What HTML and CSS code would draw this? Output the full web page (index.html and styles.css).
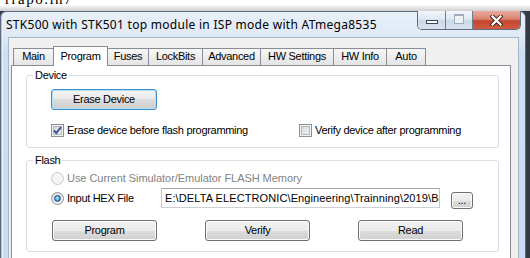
FILE: index.html
```html
<!DOCTYPE html>
<html lang="en">
    <head>
        <meta charset="UTF-8">
        <title>STK500</title>
        <link rel="stylesheet" href="styles.css">
    </head>
    <body>
    <div class="doc-strip"><p class="doc-text">rrapo.ın7</p></div>
    <div class="screen">
        <div class="window">
            <div class="titlebar">
                <div class="title">STK500 with STK501 top module in ISP mode with ATmega8535</div>
                <div class="caption-btns">
                    <div class="cap cap-min"><span class="min-bar"></span></div>
                    <div class="cap cap-max"><span class="max-box"></span></div>
                    <div class="cap cap-close">
                        <svg width="13" height="11" viewBox="0 0 13 11">
                            <path d="M2.5 1.5 L10.5 9.5 M10.5 1.5 L2.5 9.5" stroke="#4b2720" stroke-width="4.2" stroke-linecap="square" fill="none"/>
                            <path d="M2.5 1.5 L10.5 9.5 M10.5 1.5 L2.5 9.5" stroke="#fff" stroke-width="2.2" stroke-linecap="square" fill="none"/>
                        </svg>
                    </div>
                </div>
            </div>
            <div class="client">
                <div class="tabs">
                    <div class="tab tab-main">Main</div>
                    <div class="tab tab-program active">Program</div>
                    <div class="tab tab-fuses">Fuses</div>
                    <div class="tab tab-lockbits">LockBits</div>
                    <div class="tab tab-advanced">Advanced</div>
                    <div class="tab tab-hwsettings">HW Settings</div>
                    <div class="tab tab-hwinfo">HW Info</div>
                    <div class="tab tab-auto">Auto</div>
                </div>
                <div class="tab-page">
                    <fieldset class="group">
                        <legend>Device</legend>
                        <div class="device-body">
                            <button class="btn btn-default">Erase Device</button>
                            <div class="check-row">
                                <div class="check">
                                    <span class="box">
                                        <svg width="11" height="11" viewBox="0 0 11 11">
                                            <path d="M2 5.5 L4.3 8 L9 2.2" stroke="#3e5597" stroke-width="1.9" fill="none"/>
                                        </svg>
                                    </span>Erase device before flash programming
                                </div>
                                <div class="check"><span class="box"></span>Verify device after programming</div>
                            </div>
                        </div>
                    </fieldset>
                    <fieldset class="group">
                        <legend>Flash</legend>
                        <div class="flash-body">
                            <div class="option disabled"><span class="radio"></span>Use Current Simulator/Emulator FLASH Memory</div>
                            <div class="file-row">
                                <div class="option option-file"><span class="radio on"><span class="dot"></span></span>Input HEX File</div>
                                <div class="textbox"><span class="path">E:\DELTA ELECTRONIC\Engineering\Trainning\2019\Board</span></div>
                                <button class="btn btn-browse">...</button>
                            </div>
                            <div class="btn-row">
                                <button class="btn">Program</button>
                                <button class="btn">Verify</button>
                                <button class="btn">Read</button>
                            </div>
                        </div>
                    </fieldset>
                </div>
            </div>
        </div>
    </div>
    </body>
</html>
```
FILE: styles.css
```css
body {
    margin: 0;
    width: 530px;
    height: 258px;
    overflow: hidden;
    background: #fff;
    font-family: "Liberation Sans", Arial, sans-serif;
    font-size: 11px;
    letter-spacing: -0.3px;
    color: #000;
}

/* document behind the window, only the bottom of one line shows */
.doc-strip {
    height: 11px;
    display: flex;
    align-items: flex-end;
    overflow: hidden;
    background: linear-gradient(#fff 40%, #cfcfcf);
}
.doc-text {
    flex: none;
    margin: 0;
    padding-left: 5px;
    font: 15px/24px "Liberation Serif", serif;
    letter-spacing: 1.5px;
}

.screen {
    display: flex;
    height: 247px;
    background: #353a42;
}
.window {
    width: 526px;
    box-sizing: border-box;
    display: flex;
    flex-direction: column;
    border: 1px solid #5b6a7e;
    border-bottom: none;
    border-radius: 6px 6px 0 0;
    background: linear-gradient(#e8f0f9, #dfe9f5 24px, #cbdff5 42px, #c8ddf5);
    box-shadow: inset 1px 0 0 #b1c3d8, inset 2px 0 0 #eef4fb;
}

/* title bar */
.titlebar {
    height: 25px;
    flex: none;
    display: flex;
    justify-content: space-between;
    padding: 0 4px 0 5px;
}
.title {
    font: 12px/25px "Noto Sans", sans-serif;
    letter-spacing: 0.28px;
}
.caption-btns {
    display: flex;
    height: 19px;
    margin-top: -1px;
    box-sizing: border-box;
    border: 1px solid #5c6c81;
    border-top: none;
    border-radius: 0 0 5px 5px;
    overflow: hidden;
}
.cap {
    box-sizing: border-box;
    display: flex;
    justify-content: center;
    background: linear-gradient(#f2f6fb, #dfe8f2 45%, #cbd8e6 55%, #d9e3ee);
}
.cap + .cap {
    border-left: 1px solid #6e7e93;
}
.cap-min {
    width: 27px;
}
.cap-max {
    width: 27px;
}
.cap-close {
    width: 48px;
    align-items: center;
    background: linear-gradient(#eaab9d, #d9836f 45%, #c4452f 55%, #d15c3f);
}
.min-bar {
    width: 12px;
    height: 4px;
    box-sizing: border-box;
    margin-top: 9px;
    border: 1px solid #3b4657;
    background: #fff;
}
.max-box {
    width: 10px;
    height: 10px;
    box-sizing: border-box;
    margin-top: 3px;
    border: 1px solid #9eabba;
    border-top-width: 2px;
    background: #eef2f7;
}

/* client area */
.client {
    flex: 1;
    margin: 0 6px 0 7px;
    padding: 8px 7px 0 2px;
    border: 1px solid #a9b6c6;
    border-bottom: none;
    background: #f0f0f0;
}
.tabs {
    display: flex;
    align-items: flex-end;
    height: 19px;
    padding-left: 2px;
}
.tab {
    box-sizing: border-box;
    height: 17px;
    margin-left: -1px;
    border: 1px solid #898c95;
    border-bottom: none;
    background: linear-gradient(#f7f7f7, #e4e4e4);
    text-align: center;
    line-height: 15px;
    white-space: nowrap;
}
.tab:first-child {
    margin-left: 0;
}
.tab.active {
    position: relative;
    z-index: 1;
    height: 20px;
    margin-bottom: -1px;
    padding-top: 2px;
    background: #fff;
}
.tab-main { width: 41px; }
.tab-program { width: 55px; }
.tab-fuses { width: 42px; }
.tab-lockbits { width: 55px; }
.tab-advanced { width: 59px; }
.tab-hwsettings { width: 74px; }
.tab-hwinfo { width: 54px; }
.tab-auto { width: 40px; }

.tab-page {
    min-height: 200px;
    padding: 3px 11px 0 14px;
    border: 1px solid #898c95;
    background: #fff;
}

/* group boxes */
.group {
    margin: 0;
    padding: 0;
    min-width: 0;
    border: 1px solid #d5dfe5;
    border-radius: 3px;
}
.group + .group {
    margin-top: 6px;
}
.group legend {
    margin-left: 6px;
    padding: 0 2px;
    line-height: 12px;
}
.device-body {
    padding: 8px 0 10px 24px;
}
.flash-body {
    padding: 6px 0 10px 24px;
}

/* buttons */
.btn {
    box-sizing: border-box;
    width: 105px;
    height: 21px;
    padding: 0;
    border: 1px solid #707070;
    border-radius: 3px;
    background: linear-gradient(#f2f2f2, #ebebeb 50%, #dddddd 50%, #cfcfcf);
    box-shadow: inset 0 0 0 1px #fbfbfb;
    font: inherit;
    letter-spacing: inherit;
    color: #000;
    line-height: 19px;
}
.btn-default {
    width: 106px;
    border-color: #3c8fd0;
    box-shadow: inset 0 0 0 1px #b6e0f7;
}
.btn-browse {
    width: 22px;
    height: 17px;
    margin-top: 4px;
    line-height: 15px;
}
.btn-row {
    display: flex;
    gap: 48px;
    margin-top: 11px;
    padding-left: 1px;
}

/* check boxes */
.check-row {
    display: grid;
    grid-template-columns: 248px auto;
    margin-top: 14px;
}
.check {
    display: flex;
    align-items: center;
    line-height: 13px;
}
.box {
    box-sizing: border-box;
    width: 13px;
    height: 13px;
    margin-right: 3px;
    flex: none;
    border: 1px solid #8e8f8f;
    background: linear-gradient(135deg, #cfd2d7, #f8f8f8);
    box-shadow: inset 0 0 0 1px #f4f4f4, inset 0 0 0 2px #b3b8be;
}
.box svg {
    display: block;
}

/* radio buttons */
.option {
    display: flex;
    align-items: center;
    line-height: 13px;
}
.option.disabled {
    color: #838383;
    letter-spacing: -0.05px;
}
.option-file {
    margin-top: 4px;
}
.radio {
    box-sizing: border-box;
    width: 13px;
    height: 13px;
    margin-right: 3px;
    flex: none;
    display: flex;
    align-items: center;
    justify-content: center;
    border: 1px solid #8e8f8f;
    border-radius: 50%;
    background: radial-gradient(circle at 60% 65%, #fff, #d6d6d6);
}
.option.disabled .radio {
    border-color: #c9c9c9;
    background: #f4f4f4;
}
.radio .dot {
    width: 7px;
    height: 7px;
    box-sizing: border-box;
    border-radius: 50%;
    border: 1px solid #1f4d82;
    background: radial-gradient(circle at 45% 40%, #c6ecff, #4aa3e2 55%, #1e5a99);
}

/* file path row */
.file-row {
    display: grid;
    grid-template-columns: 99px 279px 22px;
    column-gap: 11px;
    align-items: start;
    margin-top: 3px;
}
.textbox {
    box-sizing: border-box;
    height: 20px;
    padding: 0 3px;
    border: 1px solid #abadb3;
    border-color: #a3a6ad #c3c6cc #cdd1d6 #c3c6cc;
    background: #fff;
    line-height: 18px;
    white-space: nowrap;
    overflow: hidden;
    letter-spacing: 0.1px;
}
```
